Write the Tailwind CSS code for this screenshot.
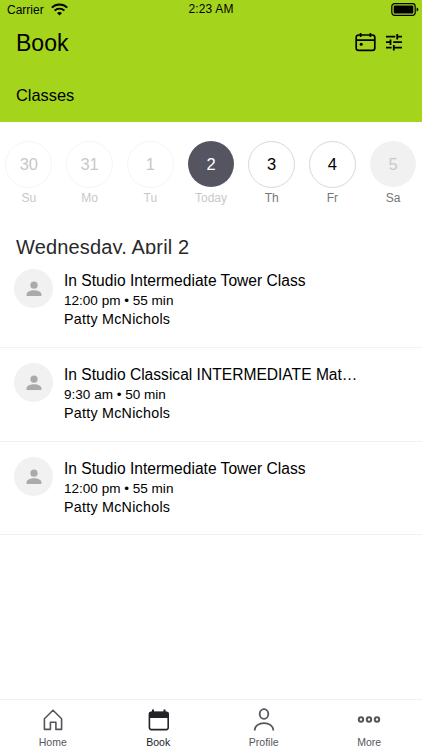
<!DOCTYPE html>
<html lang="en">
<head>
<meta charset="utf-8">
<title>Book</title>
<script src="https://cdn.jsdelivr.net/npm/@tailwindcss/browser@4"></script>
</head>
<body class="w-[422px] h-[750px] overflow-hidden bg-white font-['Liberation_Sans',Arial,sans-serif] text-black flex flex-col">
<header class="h-[122px] shrink-0 bg-[#a4d51c] flex flex-col">
  <div class="h-5 grid grid-cols-3 items-center pl-[7px] pr-[3px] text-[12px]">
    <div class="flex items-center gap-[7px]">
      <span>Carrier</span>
      <svg width="17" height="13" viewBox="0 0 17 13" fill="none" stroke="#000" stroke-width="1.9"><path d="M.8 4.7C5 .5 12 .5 16.2 4.7M3.6 7.6c2.7-2.7 7.1-2.7 9.8 0"/><path d="M6 10c1.4-1.3 3.6-1.3 5 0l-2.5 2.5z" fill="#000" stroke="none"/></svg>
    </div>
    <span class="text-center pr-[4px] -mt-px tracking-[0.15px]">2:23 AM</span>
    <svg class="justify-self-end" width="28" height="13" viewBox="0 0 28 13"><rect x=".8" y=".7" width="23.4" height="11.6" rx="2.8" fill="none" stroke="#000" stroke-width="1.2"/><rect x="2.7" y="2.6" width="19.6" height="7.8" rx="1" /><path d="M25.6 4.4q1.8.6 1.8 2.1t-1.8 2.1z"/></svg>
  </div>
  <div class="h-[46px] flex items-center justify-between pl-4 pr-[19px]">
    <h1 class="text-[23px] leading-none pt-[3px]">Book</h1>
    <div class="flex items-center gap-[9px]">
      <svg width="21" height="20" viewBox="0 0 21 20" fill="none" stroke="#000" stroke-width="1.7"><rect x="1.2" y="3" width="18.6" height="15.4" rx="2.4"/><path d="M1.2 8.1h18.6M5.6.9v4M15.4.9v4"/><circle cx="6.2" cy="12.2" r="1.5" fill="#000" stroke="none"/></svg>
      <svg width="18" height="18" viewBox="0 0 18 18" fill="none" stroke="#000" stroke-width="1.8"><path d="M1 3.7h9.3M12.2 1v5.4M12.2 3.7H17M1 9.2h4.6M5.5 6.5v5.4M8.2 9.2H17M1 14.7h5.6M8.8 12v5.4M8.8 14.7H17"/></svg>
    </div>
  </div>
  <div class="h-[60px] flex items-center pl-4 pt-[5px] text-[16.4px]">Classes</div>
</header>
<main class="grow flex flex-col">
  <div class="-ml-[1.5px] w-[425px] pt-[19px] grid grid-cols-7 text-center text-[12px] leading-[14px] text-[#777]">
    <div class="flex flex-col items-center gap-[3px] text-[#c8c8c8]"><span class="size-[47px] rounded-full border border-[#f5f5f5] flex items-center justify-center text-[16.5px] leading-[18px] pb-px">30</span>Su</div>
    <div class="flex flex-col items-center gap-[3px] text-[#c8c8c8]"><span class="size-[47px] rounded-full border border-[#f5f5f5] flex items-center justify-center text-[16.5px] leading-[18px] pb-px">31</span>Mo</div>
    <div class="flex flex-col items-center gap-[3px] text-[#c8c8c8]"><span class="size-[47px] rounded-full border border-[#f5f5f5] flex items-center justify-center text-[16.5px] leading-[18px] pb-px">1</span>Tu</div>
    <div class="flex flex-col items-center gap-[3px] text-[#c8c8c8]"><span class="size-[46px] mb-px rounded-full bg-[#545560] flex items-center justify-center text-[16.5px] leading-[18px] text-white">2</span>Today</div>
    <div class="flex flex-col items-center gap-[3px]"><span class="size-[47px] rounded-full border border-[#d8d8d8] flex items-center justify-center text-[16.5px] leading-[18px] pb-px text-black">3</span>Th</div>
    <div class="flex flex-col items-center gap-[3px]"><span class="size-[47px] rounded-full border border-[#d8d8d8] flex items-center justify-center text-[16.5px] leading-[18px] pb-px text-black">4</span>Fr</div>
    <div class="flex flex-col items-center gap-[3px]"><span class="size-[46px] mb-px rounded-full bg-[#f1f1f1] flex items-center justify-center text-[16.5px] leading-[18px] text-[#c9c9c9]">5</span>Sa</div>
  </div>
  <h2 class="mt-[31px] ml-4 h-[18px] overflow-hidden text-[20px] leading-[22px] tracking-[0.16px] text-[#292929]">Wednesday, April 2</h2>
  <section>
    <article class="h-[94px] border-b border-[#f2f2f2] flex pl-[14px] pt-[15px]">
      <div class="size-[39px] rounded-full bg-[#f1f1f1] flex items-center justify-center"><svg width="16" height="16" viewBox="0 0 16 16" fill="#aaa"><circle cx="8" cy="4.2" r="3.6"/><path d="M.6 15v-1.8C.6 10.5 5 9.2 8 9.2s7.4 1.3 7.4 4V15z"/></svg></div>
      <div class="ml-[11px] pt-px"><h3 class="text-[15.6px] leading-[22px]">In Studio Intermediate Tower Class</h3><p class="-mt-px text-[13.55px] leading-[19px]">12:00 pm • 55 min</p><p class="text-[14.3px] leading-[19px] tracking-[0.25px]">Patty McNichols</p></div>
    </article>
    <article class="h-[94px] border-b border-[#f2f2f2] flex pl-[14px] pt-[15px]">
      <div class="size-[39px] rounded-full bg-[#f1f1f1] flex items-center justify-center"><svg width="16" height="16" viewBox="0 0 16 16" fill="#aaa"><circle cx="8" cy="4.2" r="3.6"/><path d="M.6 15v-1.8C.6 10.5 5 9.2 8 9.2s7.4 1.3 7.4 4V15z"/></svg></div>
      <div class="ml-[11px] pt-px"><h3 class="text-[15.6px] leading-[22px]">In Studio Classical INTERMEDIATE Mat…</h3><p class="-mt-px text-[13.55px] leading-[19px]">9:30 am • 50 min</p><p class="text-[14.3px] leading-[19px] tracking-[0.25px]">Patty McNichols</p></div>
    </article>
    <article class="h-[93px] border-b border-[#f2f2f2] flex pl-[14px] pt-[15px]">
      <div class="size-[39px] rounded-full bg-[#f1f1f1] flex items-center justify-center"><svg width="16" height="16" viewBox="0 0 16 16" fill="#aaa"><circle cx="8" cy="4.2" r="3.6"/><path d="M.6 15v-1.8C.6 10.5 5 9.2 8 9.2s7.4 1.3 7.4 4V15z"/></svg></div>
      <div class="ml-[11px] pt-px"><h3 class="text-[15.6px] leading-[22px]">In Studio Intermediate Tower Class</h3><p class="-mt-px text-[13.55px] leading-[19px]">12:00 pm • 55 min</p><p class="text-[14.3px] leading-[19px] tracking-[0.25px]">Patty McNichols</p></div>
    </article>
  </section>
</main>
<nav class="h-[51px] shrink-0 border-t border-[#f0f0f0] grid grid-cols-4 text-[10.5px] leading-3 text-[#55565c] pt-2">
  <div class="flex flex-col items-center gap-[4px]"><svg width="24" height="24" viewBox="0 0 24 24" fill="none" stroke="#55565c" stroke-width="1.6" stroke-linejoin="round"><path d="M3.4 10.7 12 2.2l8.6 8.5v10.7h-5.7v-7.2H9.4v7.2h-6z"/></svg>Home</div>
  <div class="flex flex-col items-center gap-[4px] text-[#222227]"><svg width="24" height="24" viewBox="0 0 24 24" class="ml-[2px]"><path d="M6 1.5v4M17.5 1.5v4" stroke="#222227" stroke-width="2"/><rect x="2.4" y="4.2" width="18.8" height="17.4" rx="2" fill="none" stroke="#222227" stroke-width="1.6"/><path d="M2 9.9V5.8q0-2 2-2h15.6q2 0 2 2v4.1z" fill="#222227"/></svg>Book</div>
  <div class="flex flex-col items-center gap-[4px]"><svg width="24" height="24" viewBox="0 0 24 24" fill="none" stroke="#55565c" stroke-width="1.8"><ellipse cx="12" cy="6" rx="4.3" ry="4.9"/><path d="M2.7 22.5v-.4c0-4 4-6.9 9.3-6.9s9.3 2.9 9.3 6.9v.4"/></svg>Profile</div>
  <div class="flex flex-col items-center gap-[4px]"><svg width="24" height="24" viewBox="0 0 24 24" fill="none" stroke="#55565c" stroke-width="2"><circle cx="4" cy="11.5" r="2.2"/><circle cx="12" cy="11.5" r="2.2"/><circle cx="20" cy="11.5" r="2.2"/></svg>More</div>
</nav>
</body>
</html>
